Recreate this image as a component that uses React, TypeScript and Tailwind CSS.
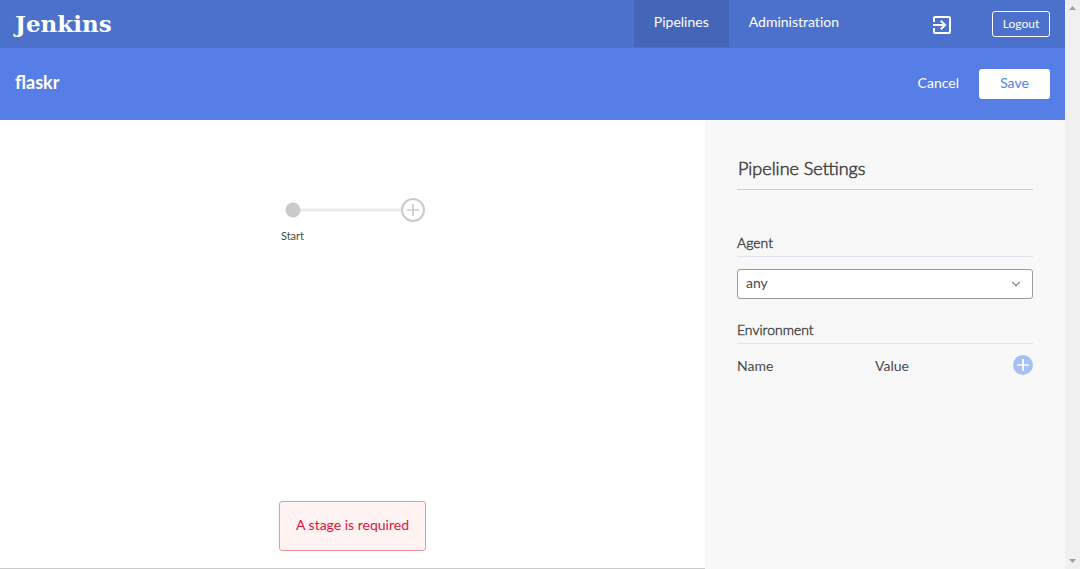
import React from "react";

function ExitIcon() {
  return (
    <svg viewBox="0 0 24 24" className="size-6 fill-white" aria-hidden="true">
      <path d="M10.09 15.59L11.5 17l5-5-5-5-1.41 1.41L12.67 11H3v2h9.67l-2.58 2.59zM19 3H5c-1.11 0-2 .9-2 2v4h2V5h14v14H5v-4H3v4c0 1.1.89 2 2 2h14c1.1 0 2-.9 2-2V5c0-1.1-.9-2-2-2z" />
    </svg>
  );
}

function TopBar() {
  return (
    <header className="flex h-12 items-stretch bg-[#4b71cd] px-[15px]">
      <a href="#" className="mr-auto self-center font-['DejaVu_Serif',serif] text-[23px] leading-8 font-bold">
        Jenkins
      </a>
      <nav className="flex text-sm leading-[44px] [font-variant-ligatures:no-common-ligatures]">
        <a href="#" className="mb-px bg-[#4565b8] px-5">Pipelines</a>
        <a href="#" className="px-5">Administration</a>
      </nav>
      <a href="#" aria-label="Go to classic view" className="mr-[38px] ml-[71px] flex items-center pt-0.5">
        <ExitIcon />
      </a>
      <button type="button" className="h-[26px] w-[58px] self-center rounded-[3px] border border-white text-xs">
        Logout
      </button>
    </header>
  );
}

function EditorBar() {
  return (
    <div className="flex h-[72px] items-center gap-5 bg-[#567ee6] px-[15px] text-sm">
      <h1 className="mr-auto pb-1 text-lg leading-6 font-bold">flaskr</h1>
      <button type="button" className="h-[30px] pb-0.5">Cancel</button>
      <button type="button" className="h-[30px] w-[71px] rounded-[3px] bg-white pb-0.5 text-[#567ee6]">
        Save
      </button>
    </div>
  );
}

function StageGraph() {
  return (
    <div className="flex flex-col items-center">
      <svg viewBox="0 0 144 24" className="h-6 w-36" role="img" aria-label="Pipeline stages">
        <path d="M12 12H120" stroke="#ebebeb" strokeWidth="3" />
        <circle cx="12" cy="12" r="7.5" fill="#cacaca" />
        <circle cx="132" cy="12" r="11" fill="#fff" stroke="#cacaca" strokeWidth="2" />
        <path d="M126 12h12M132 6v12" stroke="#cacaca" strokeWidth="1.7" />
      </svg>
      <div className="w-36">
        <span className="block w-6 pt-1.5 text-center text-[11px] leading-4 text-[#4a4a4a]">Start</span>
      </div>
    </div>
  );
}

function SettingsPanel() {
  return (
    <aside className="w-[360px] bg-[#f8f8f8] px-8 pt-9 text-sm text-[#4a4a4a]">
      <h2 className="border-b border-[#c7cee2] pb-[9px] pl-px font-['Lato_Light','Lato',sans-serif] text-lg leading-6 font-bold">
        Pipeline Settings
      </h2>
      <label
        htmlFor="agent"
        className="mt-[43px] block border-b border-[#dde2ee] pb-[3px] font-['Lato_Light','Lato',sans-serif] leading-5 font-bold"
      >
        Agent
      </label>
      <div className="relative mt-3">
        <select
          id="agent"
          className="block h-[30px] w-full appearance-none rounded-[3px] border border-[#9b9b9b] bg-white px-2 pb-0.5"
        >
          <option>any</option>
        </select>
        <svg
          viewBox="0 0 10 6"
          className="pointer-events-none absolute top-3 right-3 h-1.5 w-2.5 fill-none stroke-[#949393] stroke-[1.5]"
          aria-hidden="true"
        >
          <path d="M1.3 1 5 4.7 8.7 1" />
        </svg>
      </div>
      <h3 className="mt-[21px] border-b border-[#dfe2e9] pb-[3px] font-['Lato_Light','Lato',sans-serif] leading-5 font-bold">
        Environment
      </h3>
      <div className="mt-2.5 flex items-center">
        <span className="flex-1 pt-0.5">Name</span>
        <span className="flex-1 pt-0.5">Value</span>
        <button type="button" aria-label="Add environment variable" className="size-5 rounded-full bg-[#a5c0f2]">
          <svg viewBox="0 0 20 20" className="size-5 stroke-white stroke-[1.7]" aria-hidden="true">
            <path d="M4 10h12M10 4v12" />
          </svg>
        </button>
      </div>
    </aside>
  );
}

function ScrollTrack() {
  return (
    <div className="flex w-[15px] flex-col items-center justify-between bg-[#f0f0f0] py-1.5" aria-hidden="true">
      <svg viewBox="0 0 7 4" className="h-1 w-[7px] fill-[#a0a0a0]">
        <path d="M0 4 3.5 0 7 4z" />
      </svg>
      <svg viewBox="0 0 7 4" className="h-1 w-[7px] fill-[#a0a0a0]">
        <path d="M0 0 3.5 4 7 0z" />
      </svg>
    </div>
  );
}

export default function App() {
  return (
    <div className="flex min-h-screen bg-white font-['Lato',sans-serif] text-white">
      <div className="flex min-w-0 flex-1 flex-col">
        <TopBar />
        <EditorBar />
        <div className="flex flex-1">
          <main className="flex flex-1 flex-col items-center justify-between border-b border-[#cacaca] pt-[78px] pb-[17px]">
            <StageGraph />
            <p
              role="alert"
              className="rounded-[3px] border border-[#f0949f] bg-[#fff2f2] px-4 pt-[13px] pb-[15px] text-sm leading-5 text-[#e0143f]"
            >
              A stage is required
            </p>
          </main>
          <SettingsPanel />
        </div>
      </div>
      <ScrollTrack />
    </div>
  );
}
